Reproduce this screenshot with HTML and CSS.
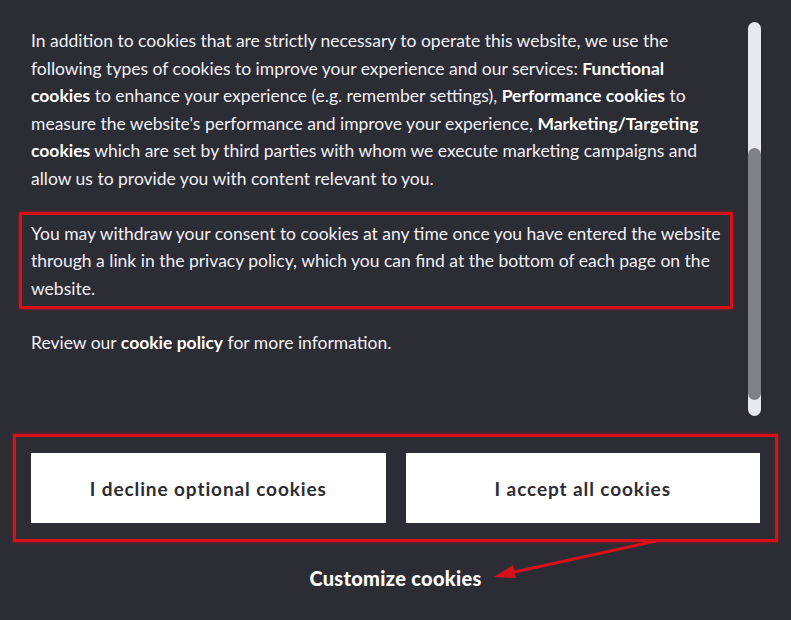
FILE: index.html
```html
<!DOCTYPE html>
<html lang="en">
<head>
  <meta charset="UTF-8" />
  <title>Cookie consent</title>
  <link rel="stylesheet" href="styles.css">
</head>
<body>
  <div class="consent">
    <div class="panel">
      <div class="text">
        <p>In addition to cookies that are strictly necessary to operate this website, we use the following types of cookies to improve your experience and our services: <b>Functional cookies</b> to enhance your experience (e.g. remember settings), <b>Performance cookies</b> to measure the website's performance and improve your experience, <b>Marketing/Targeting cookies</b> which are set by third parties with whom we execute marketing campaigns and allow us to provide you with content relevant to you.</p>
        <p class="mark">You may withdraw your consent to cookies at any time once you have entered the website through a link in the privacy policy, which you can find at the bottom of each page on the website.</p>
        <p>Review our <b>cookie policy</b> for more information.</p>
      </div>
      <div class="scrollbar">
        <div class="thumb"></div>
      </div>
    </div>

    <div class="actions">
      <button class="btn">I decline optional cookies</button>
      <button class="btn">I accept all cookies</button>
    </div>

    <div class="customize">
      <a href="#">Customize cookies</a>
    </div>

    <!-- annotation arrow -->
    <svg class="arrow" width="791" height="620" viewBox="0 0 791 620">
      <line x1="656" y1="541" x2="510" y2="573" stroke="#d8101a" stroke-width="3" stroke-linecap="round"/>
      <polygon points="494,577 513,565 516,578" fill="#d8101a"/>
    </svg>
  </div>
</body>
</html>
```

FILE: styles.css
```css
* { box-sizing: border-box; }
html, body {
  margin: 0;
  padding: 0;
  background: #2c2c35;
  color: #f0f0f5;
  font-family: Lato, "Open Sans", sans-serif;
}

.consent {
  position: relative;
  width: 791px;
  height: 620px;
  padding-top: 22px;
}

.panel {
  display: flex;
  height: 394px;
  padding-left: 31px;
}

.text {
  width: 690px;
  padding-top: 5px;
  font-size: 17.5px;
  line-height: 27.6px;
}

.text p {
  margin: 0;
}

.text b {
  font-weight: bold;
  color: #fff;
}

.text .mark {
  margin: 19px -12px 20px -12px;
  padding: 5px 6px 4px 9px;
  border: 3px solid #d8101a;
  box-shadow: 0 0 3px rgba(230, 20, 20, 0.6);
}

.scrollbar {
  position: relative;
  width: 13px;
  height: 394px;
  margin-left: 27px;
  background: #e8e8f2;
  border-radius: 7px;
}

.thumb {
  position: absolute;
  left: 0;
  top: 126px;
  width: 13px;
  height: 252px;
  background: #80808b;
  border-radius: 7px;
}

.actions {
  display: flex;
  gap: 20px;
  margin: 18px 13px 0 13px;
  padding: 16px 15px;
  border: 3px solid #d8101a;
  box-shadow: 0 0 3px rgba(230, 20, 20, 0.6);
}

.btn {
  flex: 1;
  height: 70px;
  border: none;
  background: #fff;
  color: #2c2c35;
  font-family: Lato, "Open Sans", sans-serif;
  font-size: 19px;
  font-weight: bold;
  letter-spacing: 0.9px;
}

.customize {
  text-align: center;
  margin-top: 24px;
}

.customize a {
  color: #fff;
  text-decoration: none;
  font-size: 20px;
  font-weight: 900;
  letter-spacing: 0.3px;
}

.arrow {
  position: absolute;
  left: 0;
  top: 0;
  pointer-events: none;
}
```
